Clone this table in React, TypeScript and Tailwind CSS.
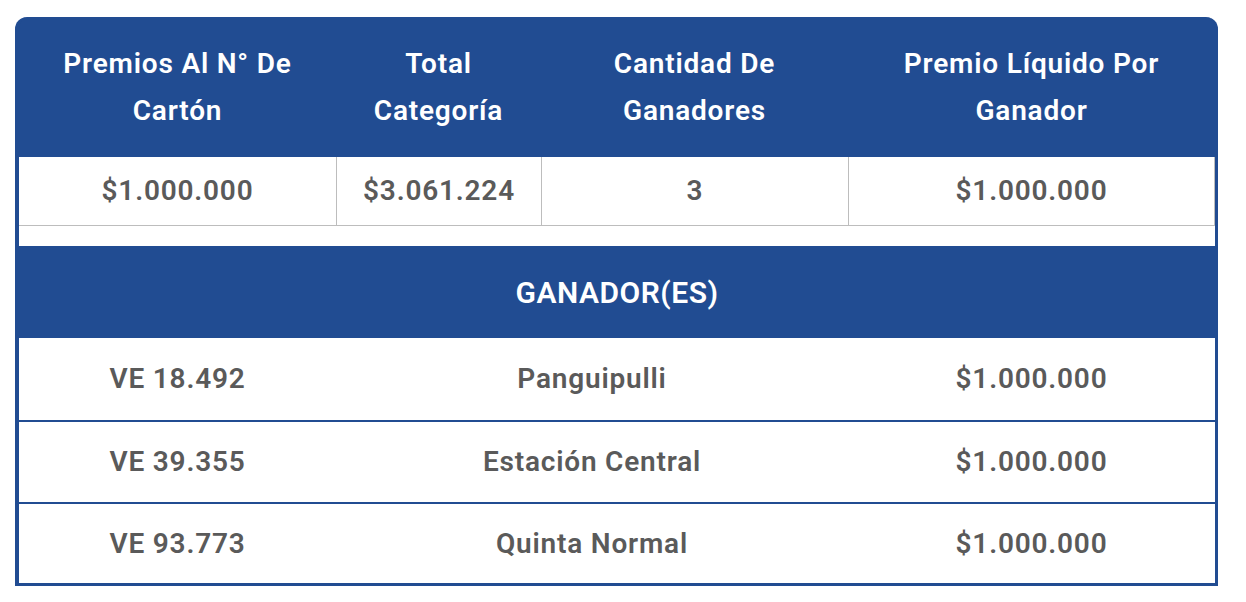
const headers = [
  ['Premios Al N° De', 'Cartón'],
  ['Total', 'Categoría'],
  ['Cantidad De', 'Ganadores'],
  ['Premio Líquido Por', 'Ganador'],
]

const summary = ['$1.000.000', '$3.061.224', '3', '$1.000.000']

const winners = [
  { carton: 'VE 18.492', comuna: 'Panguipulli', premio: '$1.000.000' },
  { carton: 'VE 39.355', comuna: 'Estación Central', premio: '$1.000.000' },
  { carton: 'VE 93.773', comuna: 'Quinta Normal', premio: '$1.000.000' },
]

export default function App() {
  return (
    <div
      className="min-h-screen bg-white pt-[17px] pl-[15px]"
      style={{ fontFamily: 'Roboto, "Liberation Sans", sans-serif' }}
    >
      <div className="w-[1203px] rounded-t-[12px] border-l-4 border-r-[3px] border-b-[3px] border-[#214c92] bg-[#214c92]">
        {/* header */}
        <div className="grid grid-cols-[317px_205px_307px_367px] h-[140px] text-white">
          {headers.map((h, i) => (
            <div
              key={i}
              className="flex flex-col items-center justify-center text-[28px] font-semibold tracking-[0.8px] leading-[47px] text-center"
            >
              <span>{h[0]}</span>
              <span>{h[1]}</span>
            </div>
          ))}
        </div>

        {/* totals row */}
        <div className="grid grid-cols-[317px_205px_307px_367px] h-[69px] bg-white border-b border-[#bdbdbd]">
          {summary.map((v, i) => (
            <div
              key={i}
              className={
                'flex items-center justify-center text-[28px] font-semibold tracking-[0.8px] text-[#5a5a5a] ' +
                (i > 0 ? 'border-l border-[#bdbdbd] ' : '') +
                (i === 3 ? 'border-r border-[#bdbdbd]' : '')
              }
            >
              {v}
            </div>
          ))}
        </div>
        <div className="h-[20px] bg-white" />

        {/* winners band */}
        <div className="flex h-[92px] items-center justify-center text-[30px] font-semibold tracking-[0.5px] text-white">
          GANADOR(ES)
        </div>

        {winners.map((w, i) => (
          <div
            key={i}
            className={
              'grid grid-cols-[317px_512px_367px] bg-white text-[28px] font-semibold tracking-[0.8px] text-[#5a5a5a] ' +
              (i === 0 ? 'h-[82px]' : i === 1 ? 'h-[82px] border-t-2 border-[#214c92]' : 'h-[81px] border-t-2 border-[#214c92]')
            }
          >
            <div className="flex items-center justify-center">{w.carton}</div>
            <div className="flex items-center justify-center">{w.comuna}</div>
            <div className="flex items-center justify-center">{w.premio}</div>
          </div>
        ))}
      </div>
    </div>
  )
}
